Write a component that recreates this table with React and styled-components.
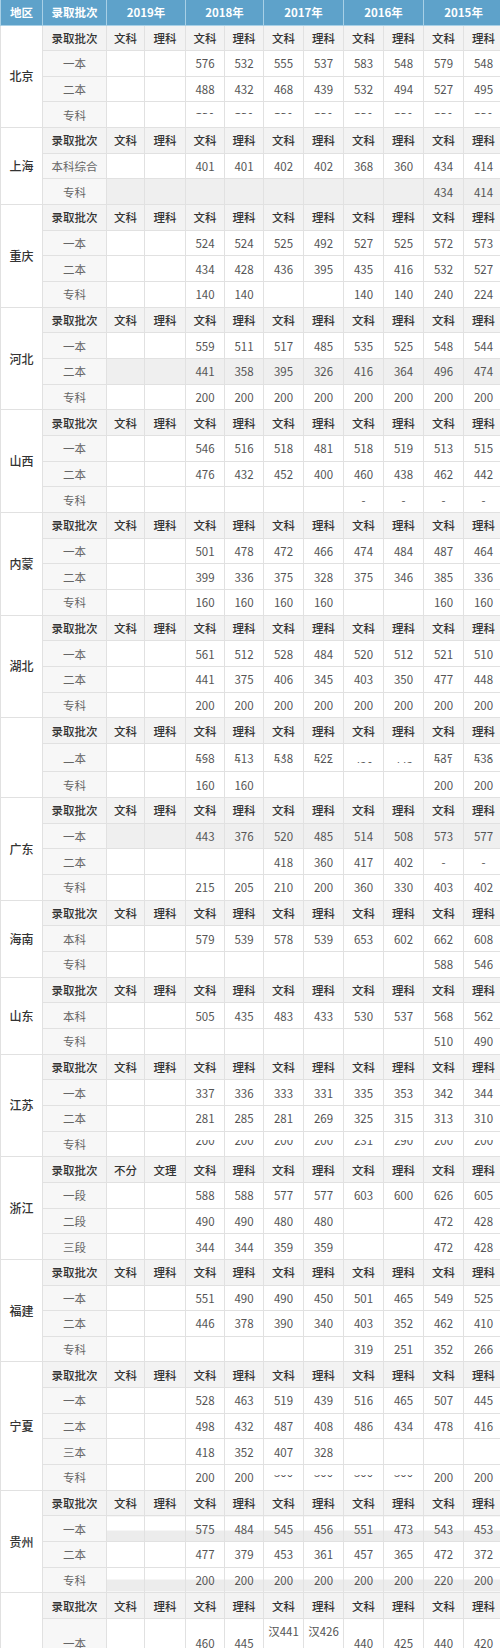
import React from 'react'
import styled, { createGlobalStyle, css } from 'styled-components'

const GlobalStyle = createGlobalStyle`
  html, body {
    margin: 0;
    padding: 0;
    background: #fff;
    overflow-x: hidden;
  }
  body {
    font-family: "Noto Sans CJK SC", "Noto Sans", sans-serif;
  }
`

const COLS = [42, 64, 38, 41, 39, 39, 40, 40, 40, 40, 40, 40]
const YEARS = ['2019年', '2018年', '2017年', '2016年', '2015年']

// helpers to build rows
const sub = (first = ['文科', '理科']) => ({
  kind: 'sub',
  label: '录取批次',
  cells: [...first, '文科', '理科', '文科', '理科', '文科', '理科', '文科', '理科'],
})
const row = (label, vals, extra = {}) => ({ label, cells: ['', '', ...vals], ...extra })
const blank = (n) => Array(n).fill('')
const bot = (v, h = 7) => ({ bot: v, h })
const split = (top, b) => ({ top, bot: b })

const REGIONS = [
  {
    name: '北京',
    rows: [
      sub(),
      row('一本', ['576', '532', '555', '537', '583', '548', '579', '548']),
      row('二本', ['488', '432', '468', '439', '532', '494', '527', '495']),
      row('专科', ['180', '180', '180', '180', '180', '180', '180', '180'].map((v) => bot(v, 3))),
    ],
  },
  {
    name: '上海',
    rows: [
      sub(),
      row('本科综合', ['401', '401', '402', '402', '368', '360', '434', '414']),
      row('专科', [...blank(6), '434', '414'], { grey: true }),
    ],
  },
  {
    name: '重庆',
    rows: [
      sub(),
      row('一本', ['524', '524', '525', '492', '527', '525', '572', '573']),
      row('二本', ['434', '428', '436', '395', '435', '416', '532', '527']),
      row('专科', ['140', '140', '', '', '140', '140', '240', '224']),
    ],
  },
  {
    name: '河北',
    rows: [
      sub(),
      row('一本', ['559', '511', '517', '485', '535', '525', '548', '544']),
      row('二本', ['441', '358', '395', '326', '416', '364', '496', '474'], { grey: true }),
      row('专科', Array(8).fill('200')),
    ],
  },
  {
    name: '山西',
    rows: [
      sub(),
      row('一本', ['546', '516', '518', '481', '518', '519', '513', '515']),
      row('二本', ['476', '432', '452', '400', '460', '438', '462', '442']),
      row('专科', [...blank(4), '-', '-', '-', '-']),
    ],
  },
  {
    name: '内蒙',
    rows: [
      sub(),
      row('一本', ['501', '478', '472', '466', '474', '484', '487', '464']),
      row('二本', ['399', '336', '375', '328', '375', '346', '385', '336']),
      row('专科', ['160', '160', '160', '160', '', '', '160', '160']),
    ],
  },
  {
    name: '湖北',
    rows: [
      sub(),
      row('一本', ['561', '512', '528', '484', '520', '512', '521', '510']),
      row('二本', ['441', '375', '406', '345', '403', '350', '477', '448']),
      row('专科', Array(8).fill('200')),
    ],
  },
  {
    name: '',
    rows: [
      sub(),
      {
        label: split('一本', '二本'),
        cells: [
          '', '',
          split('569', '498'), split('513', '413'),
          split('548', '438'), split('505', '422'),
          { top: '', th: 11, bot: '450', h: 3 }, { top: '', th: 11, bot: '445', h: 3 },
          split('535', '487'), split('526', '438'),
        ],
        h: 28.5,
      },
      row('专科', ['160', '160', ...blank(4), '200', '200']),
    ],
  },
  {
    name: '广东',
    rows: [
      sub(),
      row('一本', ['443', '376', '520', '485', '514', '508', '573', '577'], { grey: true }),
      row('二本', ['', '', '418', '360', '417', '402', '-', '-']),
      row('专科', ['215', '205', '210', '200', '360', '330', '403', '402']),
    ],
  },
  {
    name: '海南',
    rows: [
      sub(),
      row('本科', ['579', '539', '578', '539', '653', '602', '662', '608']),
      row('专科', [...blank(6), '588', '546']),
    ],
  },
  {
    name: '山东',
    rows: [
      sub(),
      row('本科', ['505', '435', '483', '433', '530', '537', '568', '562']),
      row('专科', [...blank(6), '510', '490']),
    ],
  },
  {
    name: '江苏',
    rows: [
      sub(),
      row('一本', ['337', '336', '333', '331', '335', '353', '342', '344']),
      row('二本', ['281', '285', '281', '269', '325', '315', '313', '310']),
      row('专科', ['200', '200', '200', '200', '231', '290', '200', '200'].map((v) => bot(v, 7))),
    ],
  },
  {
    name: '浙江',
    rows: [
      sub(['不分', '文理']),
      row('一段', ['588', '588', '577', '577', '603', '600', '626', '605']),
      row('二段', ['490', '490', '480', '480', '', '', '472', '428']),
      row('三段', ['344', '344', '359', '359', '', '', '472', '428']),
    ],
  },
  {
    name: '福建',
    rows: [
      sub(),
      row('一本', ['551', '490', '490', '450', '501', '465', '549', '525']),
      row('二本', ['446', '378', '390', '340', '403', '352', '462', '410']),
      row('专科', [...blank(4), '319', '251', '352', '266']),
    ],
  },
  {
    name: '宁夏',
    rows: [
      sub(),
      row('一本', ['528', '463', '519', '439', '516', '465', '507', '445']),
      row('二本', ['498', '432', '487', '408', '486', '434', '478', '416']),
      row('三本', ['418', '352', '407', '328', ...blank(4)]),
      row('专科', ['200', '200', bot('300', 4), bot('300', 4), bot('300', 4), bot('300', 4), '200', '200']),
    ],
  },
  {
    name: '贵州',
    rows: [
      sub(),
      row('一本', ['575', '484', '545', '456', '551', '473', '543', '453'], { band: 58 }),
      row('二本', ['477', '379', '453', '361', '457', '365', '472', '372']),
      row('专科', ['200', '200', '200', '200', '200', '200', '220', '200'], { band: 50 }),
    ],
  },
  {
    name: '新疆',
    rows: [
      sub(),
      row('一本', ['460', '445', { lines: ['汉441', '民400'] }, { lines: ['汉426', '民380'] }, '440', '425', '440', '420']),
      row('二本', ['390', '360', '380', '350', '370', '345', '365', '340']),
      row('专科', Array(8).fill('160')),
    ],
  },
]

const Table = styled.table`
  width: 503px;
  table-layout: fixed;
  border-collapse: collapse;
  font-size: 11.5px;
  color: #555;
`

const Col = styled.col`
  width: ${(p) => p.$w}px;
`

const HeadRow = styled.tr`
  height: 25px;
`

const Head = styled.th`
  padding: 0;
  background: #5ea2ca;
  color: #fff;
  font-weight: 700;
  font-size: 11.5px;
  text-align: center;
  border: 1px solid #a8d0e6;
  border-top: none;
  white-space: nowrap;
`

const Row = styled.tr`
  height: ${(p) => p.$h}px;
`

const cellBase = css`
  padding: 0;
  text-align: center;
  vertical-align: middle;
  border: 1px solid #e1e1e1;
  line-height: 14px;
  white-space: nowrap;
  overflow: hidden;
`

const Region = styled.td`
  ${cellBase};
  background: #fff;
  color: #333;
  font-size: 12px;
  font-weight: 500;
`

const Label = styled.td`
  ${cellBase};
  background: ${(p) => (p.$sub ? '#f3f3f3' : '#f7f7f7')};
  color: ${(p) => (p.$sub ? '#333' : '#666')};
  font-weight: ${(p) => (p.$sub ? 500 : 400)};
`

const Cell = styled.td`
  ${cellBase};
  color: ${(p) => (p.$sub ? '#333' : '#555')};
  font-weight: ${(p) => (p.$sub ? 500 : 400)};
  background: ${(p) => {
    if (p.$sub) return '#f3f3f3'
    if (p.$grey) return '#efefef'
    if (p.$band) return `linear-gradient(to bottom, #fff ${p.$band}%, #ececec ${p.$band}%)`
    return '#fff'
  }};
`

const Split = styled.span`
  display: block;
`

const TopHalf = styled.span`
  display: block;
  height: ${(p) => p.$h}px;
  overflow: hidden;
  line-height: 14px;
`

const BottomHalf = styled.span`
  display: block;
  height: ${(p) => p.$h}px;
  overflow: hidden;
  line-height: 14px;

  & > span {
    display: block;
    margin-top: ${(p) => p.$h - 14}px;
  }
`

const Line = styled.span`
  display: block;
  line-height: 24px;
`

const Content = ({ v }) => {
  if (v == null || typeof v === 'string') return v || null
  if (v.lines) return v.lines.map((l, i) => <Line key={i}>{l}</Line>)
  return (
    <Split>
      {v.top !== undefined && <TopHalf $h={v.th ?? 7}>{v.top}</TopHalf>}
      <BottomHalf $h={v.h ?? 7}>
        <span>{v.bot}</span>
      </BottomHalf>
    </Split>
  )
}

export default function App() {
  return (
    <>
      <GlobalStyle />
      <Table>
        <colgroup>
          {COLS.map((w, i) => (
            <Col key={i} $w={w} />
          ))}
        </colgroup>
        <thead>
          <HeadRow>
            <Head>地区</Head>
            <Head>录取批次</Head>
            {YEARS.map((y) => (
              <Head key={y} colSpan={2}>
                {y}
              </Head>
            ))}
          </HeadRow>
        </thead>
        <tbody>
          {REGIONS.map((r, ri) =>
            r.rows.map((rw, i) => {
              const isSub = rw.kind === 'sub'
              return (
                <Row key={`${ri}-${i}`} $h={rw.h || 25.67}>
                  {i === 0 && <Region rowSpan={r.rows.length}>{r.name}</Region>}
                  <Label $sub={isSub}>
                    <Content v={rw.label} />
                  </Label>
                  {rw.cells.map((c, ci) => (
                    <Cell key={ci} $sub={isSub} $grey={!isSub && rw.grey} $band={!isSub && rw.band}>
                      <Content v={c} />
                    </Cell>
                  ))}
                </Row>
              )
            })
          )}
        </tbody>
      </Table>
    </>
  )
}
